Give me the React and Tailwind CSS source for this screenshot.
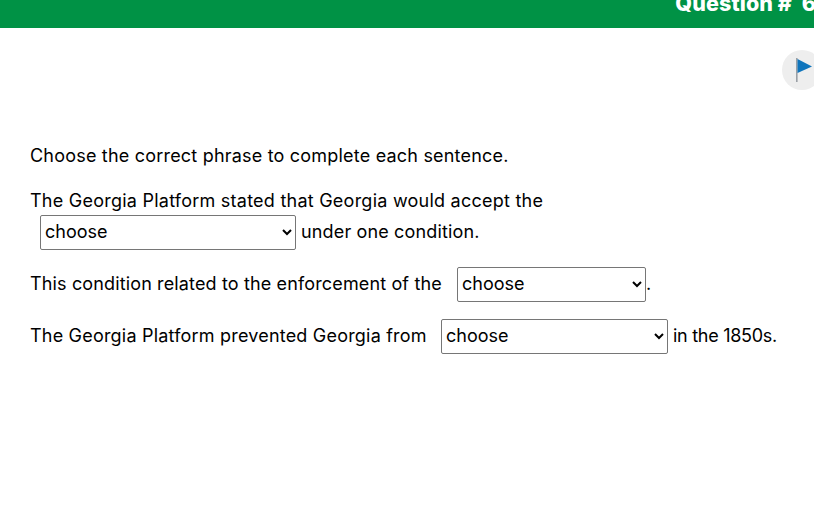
function Choose({ w, cls = "" }) {
  return (
    <select className={`h-[35px] ${w} ${cls} inline-block rounded-[2px] border border-[#767676] bg-white pb-[2px] text-[18px] text-black [font-family:Inter,sans-serif] tracking-[0px]`}>
      <option>choose</option>
    </select>
  );
}

export default function App() {
  return (
    <div className="h-[512px] w-[814px] overflow-hidden bg-white text-black [font-family:Inter,sans-serif] text-[18px] tracking-[0.2px]">
      <header className="flex h-7 justify-end overflow-hidden bg-[#009245]">
        <div className="-mt-[9px] -mr-[2px] whitespace-pre text-[21.5px] font-extrabold leading-[24px] tracking-[0.1px] text-white">Question #  6</div>
      </header>
      <div className="flex h-[84px] justify-end pt-[22px]">
        <div className="-mr-[8px] flex h-10 w-10 shrink-0 items-center justify-center rounded-full bg-[#eeeeee]">
          <svg width="20" height="28" viewBox="0 0 20 28" className="ml-[2px]">
            <rect x="3" y="2" width="1.6" height="24" fill="#9aa0a6" />
            <path d="M4.5 3 L19 10.5 L4.5 17 Z" fill="#0f75bc" />
          </svg>
        </div>
      </div>
      <main className="pl-[30px]">
        <p className="mt-[31px] h-[26px] leading-[26px]">Choose the correct phrase to complete each sentence.</p>
        <p className="mt-[19px] h-[26px] leading-[26px] tracking-[0.24px]">The Georgia Platform stated that Georgia would accept the</p>
        <div className="mt-[1px] flex h-[35px] items-center whitespace-pre">
          <Choose w="w-[256px]" cls="ml-[10px] mr-[5px]" />
          <span className="pb-[3px] tracking-[0.15px]">under one condition.</span>
        </div>
        <div className="mt-[17px] flex h-[35px] items-center whitespace-pre">
          <span className="w-[427px] pb-[2px] tracking-[0.14px]">This condition related to the enforcement of the</span>
          <Choose w="w-[189px]" />
          <span className="pb-[2px]">.</span>
        </div>
        <div className="mt-[17px] flex h-[35px] items-center whitespace-pre">
          <span className="w-[411px] pb-[2px] tracking-[0.2px]">The Georgia Platform prevented Georgia from</span>
          <Choose w="w-[227px]" cls="mr-[5px]" />
          <span className="pb-[2px] tracking-[-0.28px]">in the 1850s.</span>
        </div>
      </main>
    </div>
  );
}
